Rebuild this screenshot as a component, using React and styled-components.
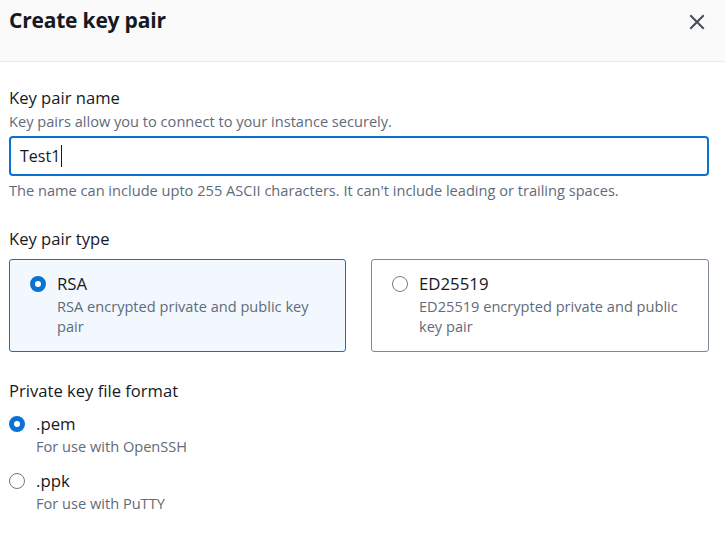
import styled, { createGlobalStyle } from "styled-components";

const GlobalStyle = createGlobalStyle`
    html, body {
        margin: 0;
        padding: 0;
        background: #FFFFFF;
    }
    body {
        font-family: "Open Sans", "Noto Sans", sans-serif;
        color: #16191F;
    }
`;

const Modal = styled.div`
    width: 725px;
    height: 539px;
    display: flex;
    flex-direction: column;
    background: #FFFFFF;
    overflow: hidden;
`;

const Header = styled.header`
    height: 62px;
    padding: 0 19px 0 9px;
    display: flex;
    justify-content: space-between;
    align-items: flex-start;
    background: #FAFAFA;
    border-bottom: 1px solid #E9EBED;
    box-sizing: border-box;
`;

const Title = styled.h2`
    margin: 4px 0 0;
    font-size: 21px;
    font-weight: 700;
    letter-spacing: -0.2px;
    line-height: 32px;
    color: #16191F;
`;

const CloseButton = styled.button`
    margin-top: 13px;
    width: 18px;
    height: 18px;
    padding: 0;
    border: none;
    background: none;
    display: flex;
    align-items: center;
    justify-content: center;
    svg {
        width: 16px;
        height: 16px;
    }
`;

const Body = styled.div`
    padding: 23px 16px 0 9px;
    display: flex;
    flex-direction: column;
`;

const Field = styled.section`
    display: flex;
    flex-direction: column;
    margin-bottom: ${(p) => p.$gap || 0}px;
`;

const Label = styled.label`
    font-size: 16.6px;
    line-height: 26px;
    color: #16191F;
`;

const Description = styled.p`
    margin: 0;
    font-size: 14.6px;
    line-height: 20px;
    color: #5F6B7A;
`;

const TextInput = styled.div`
    margin-top: 5px;
    height: 40px;
    border: 2px solid #0972D3;
    border-radius: 4px;
    box-sizing: border-box;
    padding: 0 9px;
    display: flex;
    align-items: center;
    font-size: 16px;
    color: #16191F;
`;

const Caret = styled.span`
    display: inline-block;
    width: 1px;
    height: 22px;
    margin-left: 1px;
    background: #16191F;
`;

const Constraint = styled(Description)`
    margin-top: 4px;
`;

const CardGrid = styled.div`
    margin-top: 7px;
    display: grid;
    grid-template-columns: 337px 338px;
    column-gap: 25px;
`;

const Card = styled.div`
    height: 93px;
    box-sizing: border-box;
    padding: 15px 20px 0 20px;
    border: 1px solid ${(p) => (p.$checked ? "#0972D3" : "#7D8998")};
    border-radius: 3px;
    background: ${(p) => (p.$checked ? "#F2F8FD" : "#FFFFFF")};
    display: flex;
    gap: 11px;
`;

const Radio = styled.span`
    flex: none;
    width: 16px;
    height: 16px;
    margin-top: 1px;
    border-radius: 50%;
    box-sizing: border-box;
    border: ${(p) => (p.$checked ? "5px solid #0972D3" : "1.5px solid #6F7B8A")};
    background: #FFFFFF;
`;

const OptionText = styled.div`
    display: flex;
    flex-direction: column;
`;

const OptionTitle = styled.span`
    font-size: 16.8px;
    line-height: 18px;
    color: #16191F;
`;

const OptionDesc = styled.span`
    margin-top: 3px;
    font-size: 14.6px;
    line-height: 20px;
    color: #5F6B7A;
`;

const RadioList = styled.div`
    margin-top: 11px;
    display: flex;
    flex-direction: column;
    gap: 16px;
`;

const RadioRow = styled.div`
    display: flex;
    gap: 11px;
`;

const CloseIcon = () => (
    <svg viewBox="0 0 16 16" fill="none" stroke="#414D5C" strokeWidth="2" strokeLinecap="square">
        <path d="M2 2l12 12M14 2L2 14" />
    </svg>
);

function Option({ checked, title, desc }) {
    return (
        <>
            <Radio $checked={checked} />
            <OptionText>
                <OptionTitle>{title}</OptionTitle>
                <OptionDesc>{desc}</OptionDesc>
            </OptionText>
        </>
    );
}

export default function App() {
    const types = [
        { id: "rsa", title: "RSA", desc: "RSA encrypted private and public key pair", checked: true },
        { id: "ed", title: "ED25519", desc: "ED25519 encrypted private and public key pair", checked: false },
    ];
    const formats = [
        { id: "pem", title: ".pem", desc: "For use with OpenSSH", checked: true },
        { id: "ppk", title: ".ppk", desc: "For use with PuTTY", checked: false },
    ];

    return (
        <Modal>
            <GlobalStyle />
            <Header>
                <Title>Create key pair</Title>
                <CloseButton aria-label="Close">
                    <CloseIcon />
                </CloseButton>
            </Header>
            <Body>
                <Field $gap={26}>
                    <Label>Key pair name</Label>
                    <Description>Key pairs allow you to connect to your instance securely.</Description>
                    <TextInput>
                        Test1<Caret />
                    </TextInput>
                    <Constraint>
                        The name can include upto 255 ASCII characters. It can't include leading or trailing spaces.
                    </Constraint>
                </Field>
                <Field $gap={26}>
                    <Label>Key pair type</Label>
                    <CardGrid>
                        {types.map((t) => (
                            <Card key={t.id} $checked={t.checked}>
                                <Option {...t} />
                            </Card>
                        ))}
                    </CardGrid>
                </Field>
                <Field>
                    <Label>Private key file format</Label>
                    <RadioList>
                        {formats.map((f) => (
                            <RadioRow key={f.id}>
                                <Option {...f} />
                            </RadioRow>
                        ))}
                    </RadioList>
                </Field>
            </Body>
        </Modal>
    );
}
